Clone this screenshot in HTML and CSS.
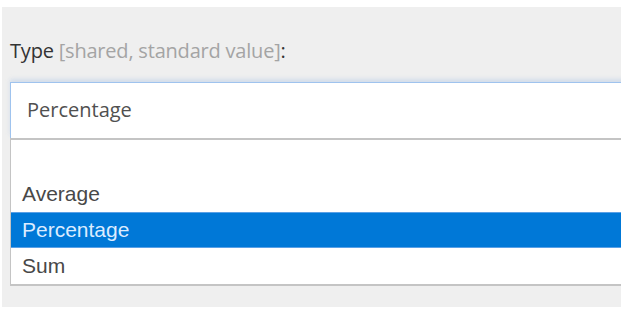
FILE: index.html
```html
<!DOCTYPE html>
<html lang="en">
<head>
    <meta charset="UTF-8">
    <title>Type field</title>
    <link rel="stylesheet" href="styles.css">
</head>
<body>

    <div class="panel">
        <div class="field-label">
            Type <span class="hint">[shared, standard value]</span>:
        </div>

        <div class="select-box">Percentage</div>

        <ul class="options">
            <li class="option"></li>
            <li class="option">Average</li>
            <li class="option selected">Percentage</li>
            <li class="option">Sum</li>
        </ul>
    </div>

</body>
</html>
```

FILE: styles.css
```css
body {
    margin: 0;
    padding: 7px 0 0 2px;
    background-color: #ffffff;
    font-family: 'Open Sans', sans-serif;
}

.panel {
    width: 619px;
    height: 300px;
    background-color: #efefef;
    overflow: hidden;
    padding: 0 0 0 8px;
    box-sizing: border-box;
}

.field-label {
    padding-top: 29px;
    height: 46px;
    font-size: 20px;
    line-height: 30px;
    color: #333;
    letter-spacing: -0.2px;
}

.hint {
    color: #a4a4a4;
}

.select-box {
    width: 640px;
    height: 56px;
    box-sizing: border-box;
    background-color: #ffffff;
    border: 1px solid #9fc3ee;
    border-bottom: none;
    box-shadow: 0 -3px 4px rgba(160, 190, 225, 0.35);
    padding-left: 16px;
    font-size: 20px;
    line-height: 54px;
    color: #505050;
}

.options {
    list-style: none;
    margin: 0;
    padding: 0;
    width: 640px;
    background-color: #ffffff;
    border: 1px solid #c4c4c4;
    border-width: 2px 1px 2px 1px;
    font-family: 'Liberation Sans', Arial, sans-serif;
}

.option {
    height: 36px;
    line-height: 36px;
    padding-left: 11px;
    font-size: 21px;
    color: #484848;
}

.option.selected {
    background-color: #0078d7;
    color: #dcecff;
    border-top: 1px solid #5aa0e6;
    border-bottom: 1px solid #5aa0e6;
    height: 34px;
    line-height: 34px;
}
```
